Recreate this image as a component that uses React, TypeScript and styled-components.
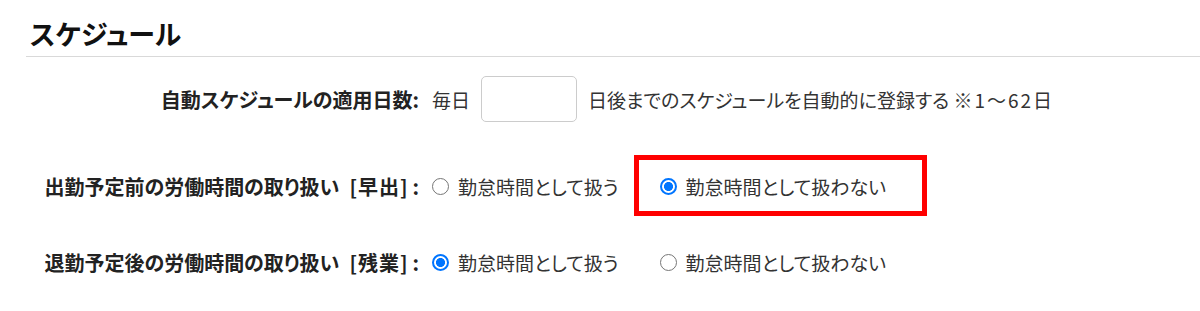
import React from 'react'
import styled, { createGlobalStyle } from 'styled-components'

interface RowProps {
	$height: number
	$top?: number
}

const GlobalStyle = createGlobalStyle`
	body {
		margin: 0;
		background: #fff;
		font-family: "Noto Sans CJK JP", "Noto Sans", sans-serif;
		font-feature-settings: "palt";
		color: #333;
	}
`

const options = ['勤怠時間として扱う', '勤怠時間として扱わない']

const RadioGroup = ({
	name,
	checked,
	highlight,
}: {
	name: string
	checked: number
	highlight?: number
}) => (
	<Options>
		{options.map((text, i) => (
			<Option key={text}>
				<Radio type="radio" name={name} defaultChecked={i === checked} />
				<span>{text}</span>
				{highlight === i && <Highlight />}
			</Option>
		))}
	</Options>
)

const App = () => {
	return (
		<Section>
			<GlobalStyle />
			<Title>スケジュール</Title>
			<Form>
				<Row $height={46}>
					<Label>自動スケジュールの適用日数:</Label>
					<Field>
						<span>毎日</span>
						<DaysInput type="text" />
						<span>
							日後までのスケジュールを自動的に登録する <Note>※1〜62日</Note>
						</span>
					</Field>
				</Row>
				<Row $height={76} $top={26}>
					<Label>
						出勤予定前の労働時間の取り扱い<Tag>[早出]</Tag>:
					</Label>
					<RadioGroup name="early" checked={1} highlight={1} />
				</Row>
				<Row $height={76}>
					<Label>
						退勤予定後の労働時間の取り扱い<Tag>[残業]</Tag>:
					</Label>
					<RadioGroup name="overtime" checked={0} />
				</Row>
			</Form>
		</Section>
	)
}

const Section = styled.section`
	margin-left: 26px;
`

const Title = styled.h2`
	margin: 0;
	padding: 17px 0 5px 4px;
	font-size: 27px;
	line-height: 34px;
	font-weight: 700;
	color: #111;
	border-bottom: 1px solid #d9d9d9;
`

const Form = styled.div`
	padding-top: 19px;
	display: flex;
	flex-direction: column;
`

const Row = styled.div<RowProps>`
	height: ${(props) => props.$height}px;
	margin-top: ${(props) => props.$top || 0}px;
	display: grid;
	grid-template-columns: 393px 1fr;
	column-gap: 13px;
	align-items: center;
`

const Label = styled.div`
	text-align: right;
	font-size: 20px;
	font-weight: 700;
	color: #222;
	white-space: nowrap;
`

const Tag = styled.span`
	margin: 0 4px 0 10px;
	letter-spacing: 1px;
`

const Field = styled.div`
	display: flex;
	align-items: center;
	gap: 11px;
	font-size: 19px;
	white-space: nowrap;
`

const Note = styled.span`
	letter-spacing: 2px;
`

const DaysInput = styled.input`
	width: 96px;
	height: 46px;
	box-sizing: border-box;
	border: 1px solid #ccc;
	border-radius: 5px;
	padding: 0 8px;
	font-size: 18px;
	outline: none;
`

const Options = styled.div`
	display: flex;
	align-items: center;
	gap: 41px;
`

const Option = styled.label`
	position: relative;
	height: 30px;
	display: inline-flex;
	align-items: center;
	gap: 9px;
	font-size: 19px;
	white-space: nowrap;
`

const Radio = styled.input`
	appearance: none;
	margin: 0;
	width: 17px;
	height: 17px;
	box-sizing: border-box;
	border-radius: 50%;
	border: 1.5px solid #767676;
	background: #fff;

	&:checked {
		border: 2px solid #0075ff;
		background: radial-gradient(circle, #0075ff 0 4.2px, #fff 4.8px);
	}
`

const Highlight = styled.span`
	position: absolute;
	top: -16px;
	bottom: -15px;
	left: -26px;
	right: -41px;
	border: 5px solid #ff0000;
	pointer-events: none;
`

export default App
